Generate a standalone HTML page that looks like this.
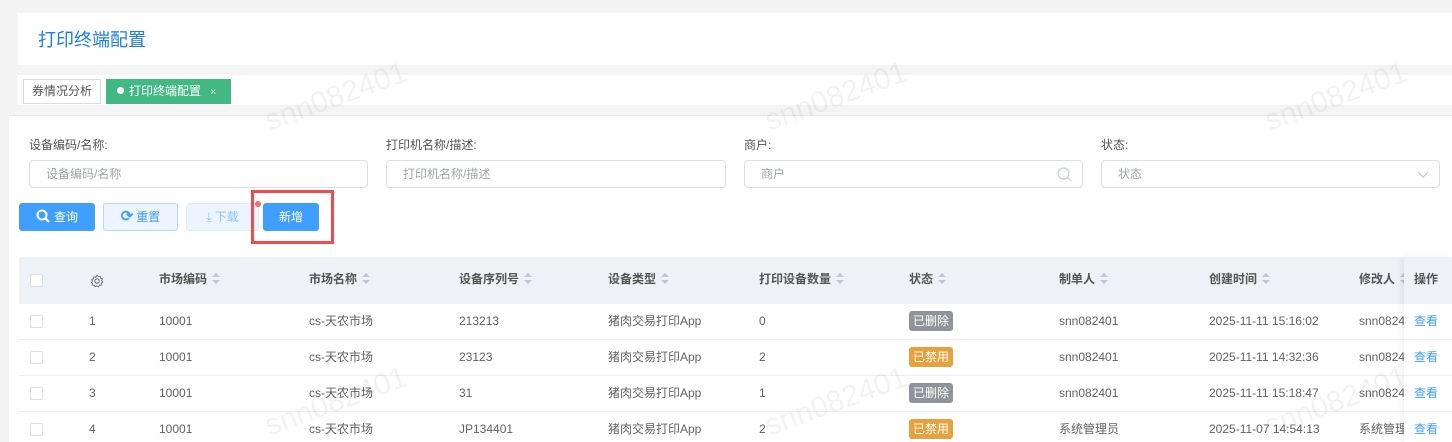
<!DOCTYPE html>
<html><head><meta charset="utf-8"><style>
*{box-sizing:border-box;margin:0;padding:0}
html,body{width:1452px;height:442px;overflow:hidden}
body{background:#f4f4f5;font-family:"Liberation Sans","Noto Sans CJK SC",sans-serif;font-size:12px;line-height:16px;color:#606266;position:relative}
.abs{position:absolute}
.hdr{left:18px;top:13px;right:0;height:52px;background:#fff}
.hdr span{position:absolute;left:20px;top:16px;font-size:18px;line-height:22px;color:#1e7ee6}
.tabs{left:18px;top:75px;right:0;height:30px;background:#fff}
.tab{position:absolute;top:4px;height:25px;line-height:23px;font-size:12px;padding:0 8px;border:1px solid #d8dce5}
.card{left:9px;top:115px;right:0;bottom:0;background:#fff;border-top:1px solid #e6e6e6}
.lbl{position:absolute;top:137px;font-size:12px;color:#555}
.inp{position:absolute;top:160px;height:28px;border:1px solid #dcdfe6;border-radius:4px;padding-left:16px;line-height:26px;color:#a0a4ab;font-size:12px}
.btn{position:absolute;top:203px;height:28px;border-radius:3px;line-height:28px;font-size:12px;text-align:center}
.th{left:19px;top:257px;right:0;height:47px;background:#eef1f6}
.c{position:absolute;white-space:nowrap;line-height:16px}
.h{font-weight:bold;color:#555;top:271px}
.s{display:inline-block;vertical-align:middle;margin-left:5px;width:8px;height:12px;position:relative;top:-1px}
.s:before{content:"";position:absolute;left:0;top:0;border:4px solid transparent;border-bottom:4px solid #c0c4cc;border-top:0}
.s:after{content:"";position:absolute;left:0;top:7px;border:4px solid transparent;border-top:4px solid #c0c4cc;border-bottom:0}
.row{position:absolute;left:19px;right:0;height:36px;border-bottom:1px solid #ebeef5}
.cb{position:absolute;left:30px;width:13px;height:13px;border:1px solid #dcdfe6;border-radius:2px;background:#fff}
.tag{display:inline-block;height:20px;line-height:20px;padding:0 4px;border-radius:3px;color:#fff;font-size:12px}
.g{background:#909399}.o{background:#e6a23c}
.op{position:absolute;left:1404px;top:257px;width:48px;bottom:0;background:#fff;box-shadow:-3px 0 6px rgba(0,0,0,.06)}
.op div{line-height:16px}
.wm{position:absolute;color:rgba(0,0,0,.05);font-size:30px;line-height:34px;transform:rotate(-20deg)}
</style></head><body>
<div class="abs hdr"><span>打印终端配置</span></div>
<div class="abs tabs">
<div class="tab" style="left:5px;color:#555">券情况分析</div>
<div class="tab" style="left:88px;background:#42b983;border-color:#42b983;color:#fff;padding:0 14px 0 10px"><span style="display:inline-block;width:7px;height:7px;border-radius:50%;background:#fff;margin-right:5px;vertical-align:1px"></span>打印终端配置 <span style="font-size:10px;margin-left:6px">×</span></div>
</div>
<div class="abs card"></div>
<div class="lbl" style="left:29px">设备编码/名称:</div>
<div class="lbl" style="left:386px">打印机名称/描述:</div>
<div class="lbl" style="left:744px">商户:</div>
<div class="lbl" style="left:1101px">状态:</div>
<div class="inp" style="left:29px;width:339px">设备编码/名称</div>
<div class="inp" style="left:386px;width:340px">打印机名称/描述</div>
<div class="inp" style="left:744px;width:339px">商户<svg style="position:absolute;right:10px;top:6px" width="15" height="15" viewBox="0 0 15 15"><circle cx="6.5" cy="6.5" r="5.5" fill="none" stroke="#c8cdd6" stroke-width="1.2"/><path d="M10.5 10.5L14 14" stroke="#c8cdd6" stroke-width="1.2"/></svg></div>
<div class="inp" style="left:1101px;width:339px">状态<svg style="position:absolute;right:10px;top:10px" width="12" height="7" viewBox="0 0 12 7"><path d="M1 1l5 5 5-5" fill="none" stroke="#c0c4cc" stroke-width="1.2"/></svg></div>
<div class="btn" style="left:19px;width:76px;background:#409eff;color:#fff"><svg width="14" height="14" viewBox="0 0 14 14" style="vertical-align:-2px;margin-right:4px"><circle cx="6" cy="6" r="4.5" fill="none" stroke="#fff" stroke-width="2"/><path d="M9.5 9.5L13 13" stroke="#fff" stroke-width="2.2"/></svg>查询</div>
<div class="btn" style="left:103px;width:75px;background:#ecf5ff;border:1px solid #b3d8ff;color:#409eff;line-height:26px"><span style="font-size:15px;font-weight:bold;margin-right:3px">⟳</span>重置</div>
<div class="btn" style="left:186px;width:73px;background:#ecf5ff;border:1px solid #d9ecff;color:#8cc5ff;line-height:26px">⤓ 下载</div>
<div class="btn" style="left:263px;width:56px;background:#409eff;color:#fff">新增</div>
<div class="abs" style="left:251px;top:190px;width:83px;height:54px;border:3px solid #f14c4c"></div>
<div class="abs" style="left:255px;top:201px;width:6px;height:6px;border-radius:50%;background:#f56c6c"></div>
<div class="abs th"></div>
<div class="cb" style="top:274px"></div>
<svg class="c" style="left:90px;top:274px" width="14" height="14" viewBox="0 0 14 14"><circle cx="7" cy="7" r="2.2" fill="none" stroke="#777" stroke-width="1.1"/><path d="M7 1.2l1.3 1.4 1.9-.4.4 1.9 1.8.7-.7 1.8 1 1.5-1.5 1.1.1 1.9-1.9.1-1 1.6-1.6-1-1.6 1-1-1.6-1.9-.1.1-1.9L1.4 8.7l1-1.5-.7-1.8 1.8-.7.4-1.9 1.9.4z" fill="none" stroke="#777" stroke-width="1"/></svg>
<div class="c h" style="left:159px">市场编码<span class="s"></span></div>
<div class="c h" style="left:309px">市场名称<span class="s"></span></div>
<div class="c h" style="left:459px">设备序列号<span class="s"></span></div>
<div class="c h" style="left:608px">设备类型<span class="s"></span></div>
<div class="c h" style="left:759px">打印设备数量<span class="s"></span></div>
<div class="c h" style="left:909px">状态<span class="s"></span></div>
<div class="c h" style="left:1059px">制单人<span class="s"></span></div>
<div class="c h" style="left:1209px">创建时间<span class="s"></span></div>
<div class="c h" style="left:1359px">修改人<span class="s"></span></div>

<div class="row" style="top:304px"></div><div class="row" style="top:340px"></div><div class="row" style="top:376px"></div><div class="row" style="top:412px"></div>

<div class="cb" style="top:315px"></div><div class="c" style="left:89px;top:313px">1</div><div class="c" style="left:159px;top:313px">10001</div><div class="c" style="left:309px;top:313px">cs-天农市场</div><div class="c" style="left:459px;top:313px">213213</div><div class="c" style="left:608px;top:313px">猪肉交易打印App</div><div class="c" style="left:759px;top:313px">0</div><div class="c" style="left:909px;top:311px"><span class="tag g">已删除</span></div><div class="c" style="left:1059px;top:313px">snn082401</div><div class="c" style="left:1209px;top:313px">2025-11-11 15:16:02</div><div class="c" style="left:1359px;top:313px">snn082401</div>

<div class="cb" style="top:351px"></div><div class="c" style="left:89px;top:349px">2</div><div class="c" style="left:159px;top:349px">10001</div><div class="c" style="left:309px;top:349px">cs-天农市场</div><div class="c" style="left:459px;top:349px">23123</div><div class="c" style="left:608px;top:349px">猪肉交易打印App</div><div class="c" style="left:759px;top:349px">2</div><div class="c" style="left:909px;top:347px"><span class="tag o">已禁用</span></div><div class="c" style="left:1059px;top:349px">snn082401</div><div class="c" style="left:1209px;top:349px">2025-11-11 14:32:36</div><div class="c" style="left:1359px;top:349px">snn082401</div>

<div class="cb" style="top:387px"></div><div class="c" style="left:89px;top:385px">3</div><div class="c" style="left:159px;top:385px">10001</div><div class="c" style="left:309px;top:385px">cs-天农市场</div><div class="c" style="left:459px;top:385px">31</div><div class="c" style="left:608px;top:385px">猪肉交易打印App</div><div class="c" style="left:759px;top:385px">1</div><div class="c" style="left:909px;top:383px"><span class="tag g">已删除</span></div><div class="c" style="left:1059px;top:385px">snn082401</div><div class="c" style="left:1209px;top:385px">2025-11-11 15:18:47</div><div class="c" style="left:1359px;top:385px">snn082401</div>

<div class="cb" style="top:423px"></div><div class="c" style="left:89px;top:421px">4</div><div class="c" style="left:159px;top:421px">10001</div><div class="c" style="left:309px;top:421px">cs-天农市场</div><div class="c" style="left:459px;top:421px">JP134401</div><div class="c" style="left:608px;top:421px">猪肉交易打印App</div><div class="c" style="left:759px;top:421px">2</div><div class="c" style="left:909px;top:419px"><span class="tag o">已禁用</span></div><div class="c" style="left:1059px;top:421px">系统管理员</div><div class="c" style="left:1209px;top:421px">2025-11-07 14:54:13</div><div class="c" style="left:1359px;top:421px">系统管理员</div>

<div class="op">
<div style="height:47px;background:#eef1f6;padding:14px 0 0 10px;font-weight:bold;color:#555">操作</div>
<div style="height:36px;border-bottom:1px solid #ebeef5;padding:9px 0 0 10px;color:#409eff">查看</div>
<div style="height:36px;border-bottom:1px solid #ebeef5;padding:9px 0 0 10px;color:#409eff">查看</div>
<div style="height:36px;border-bottom:1px solid #ebeef5;padding:9px 0 0 10px;color:#409eff">查看</div>
<div style="height:30px;padding:9px 0 0 10px;color:#409eff">查看</div>
</div>
<div class="wm" style="left:262px;top:80px">snn082401</div>
<div class="wm" style="left:762px;top:80px">snn082401</div>
<div class="wm" style="left:1262px;top:80px">snn082401</div>
<div class="wm" style="left:262px;top:385px">snn082401</div>
<div class="wm" style="left:762px;top:385px">snn082401</div>
<div class="wm" style="left:1262px;top:385px">snn082401</div>
</body></html>
